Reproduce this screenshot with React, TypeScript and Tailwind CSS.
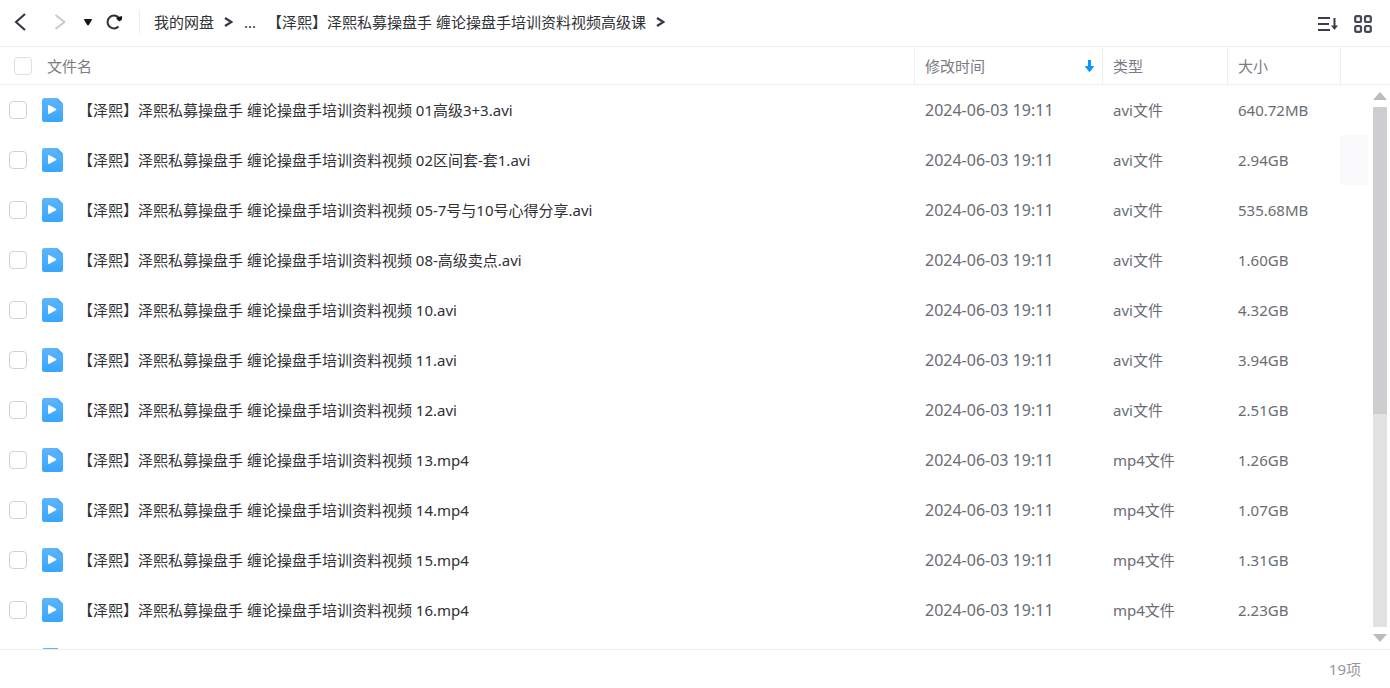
import React from "react";

type FileRow = { name: string; type: string; size: string; marked?: boolean };

const prefix = "【泽熙】泽熙私募操盘手 缠论操盘手培训资料视频 ";

const files: FileRow[] = [
  { name: "01高级3+3.avi", type: "avi文件", size: "640.72MB" },
  { name: "02区间套-套1.avi", type: "avi文件", size: "2.94GB", marked: true },
  { name: "05-7号与10号心得分享.avi", type: "avi文件", size: "535.68MB" },
  { name: "08-高级卖点.avi", type: "avi文件", size: "1.60GB" },
  { name: "10.avi", type: "avi文件", size: "4.32GB" },
  { name: "11.avi", type: "avi文件", size: "3.94GB" },
  { name: "12.avi", type: "avi文件", size: "2.51GB" },
  { name: "13.mp4", type: "mp4文件", size: "1.26GB" },
  { name: "14.mp4", type: "mp4文件", size: "1.07GB" },
  { name: "15.mp4", type: "mp4文件", size: "1.31GB" },
  { name: "16.mp4", type: "mp4文件", size: "2.23GB" },
];

function VideoIcon() {
  return (
    <svg className="h-6 w-[22px] shrink-0" viewBox="0 0 22 24" aria-hidden="true">
      <defs>
        <linearGradient id="file-fill" x1="0" y1="0" x2="0" y2="1">
          <stop offset="0" stopColor="#5fb5fc" />
          <stop offset="1" stopColor="#37a5fd" />
        </linearGradient>
      </defs>
      <path d="M2.500 0H15.500L21 5.500V21.500a2.500 2.500 0 0 1-2.500 2.500H2.500A2.500 2.500 0 0 1 0 21.500V2.500A2.500 2.500 0 0 1 2.500 0Z" fill="url(#file-fill)" />
      <path d="M15.500 0.500L20.500 5.500H17.500a2 2 0 0 1-2-2Z" fill="#4aa9f8" />
      <path d="M6 7.700v7.600c0 .7.500.9 1 .6l6.900-3.700c.6-.4.6-1 0-1.400L7 7.100c-.5-.3-1 0-1 .6Z" fill="#fff" />
    </svg>
  );
}

function Chevron() {
  return (
    <svg className="h-[10px] w-[9px]" viewBox="0 0 9 10" fill="none" stroke="#333640" strokeWidth="2.200" aria-hidden="true">
      <path d="M1 1l6.500 4L1 9" />
    </svg>
  );
}

const boxClass =
  "block size-[18px] shrink-0 appearance-none rounded-[4px] border bg-white checked:bg-[#06a7ff]";

export default function App() {
  return (
    <div className="flex h-screen flex-col overflow-hidden bg-white font-['Noto_Sans','Noto_Sans_CJK_SC',sans-serif] text-[15px] leading-5 text-[#303136]">
      <header className="flex h-[46px] shrink-0 items-center justify-between pr-[18px] pl-3">
        <div className="flex items-center pb-[2px]">
          <button aria-label="后退" className="flex h-6 w-4 items-center justify-center">
            <svg className="h-[18px] w-3" viewBox="0 0 12 18" fill="none" stroke="#30323c" strokeWidth="2">
              <path d="M11 1L2 9l9 8" />
            </svg>
          </button>
          <button aria-label="前进" className="ml-6 flex h-6 w-4 items-center justify-center">
            <svg className="h-4 w-3" viewBox="0 0 12 16" fill="none" stroke="#c8c9cc" strokeWidth="2">
              <path d="M1.500 1l9 7-9 7" />
            </svg>
          </button>
          <button aria-label="历史记录" className="ml-3 flex h-6 w-4 items-center justify-center">
            <svg className="h-[7px] w-2" viewBox="0 0 8 7" fill="#15161c">
              <path d="M.5 0h7q.7.2.3 1L5 5.800q-1 1.200-2 0L.2 1Q-.2.2.5 0Z" />
            </svg>
          </button>
          <button aria-label="刷新" className="ml-2 flex h-6 w-5 items-center justify-center">
            <svg className="size-[18px]" viewBox="0 0 18 18" fill="none">
              <path d="M13.500 13.500A6.400 6.400 0 1 1 13.500 4.500" stroke="#30323c" strokeWidth="2" />
              <path d="M17 3v3.500l-2.500 2L11.500 6V4.500Z" fill="#15161c" />
            </svg>
          </button>
          <span className="ml-[15px] h-6 w-px bg-[#ededee]" />
          <nav aria-label="路径" className="ml-[14px] flex items-center whitespace-nowrap">
            <a href="#root">我的网盘</a>
            <span className="mr-[11px] ml-[10px]"><Chevron /></span>
            <a href="#more">...</a>
            <a href="#current" className="ml-[11px]">【泽熙】泽熙私募操盘手 缠论操盘手培训资料视频高级课</a>
            <span className="ml-[10px]"><Chevron /></span>
          </nav>
        </div>
        <div className="flex items-center gap-4 pt-[2px]">
          <button aria-label="排序">
            <svg className="block h-4 w-5" viewBox="0 0 20 16" fill="none" stroke="#3b3d48" strokeWidth="2">
              <path d="M0 2h12M0 8h11M0 14h12M16.500 2v10" />
              <path d="M13 9.500h7l-3.500 4.500Z" fill="#3b3d48" stroke="none" />
            </svg>
          </button>
          <button aria-label="网格视图">
            <svg className="block size-[18px]" viewBox="0 0 18 18" fill="none" stroke="#464854" strokeWidth="2.200">
              <rect x="1.200" y="1.200" width="5.800" height="5.800" rx="1.500" />
              <rect x="11" y="1.200" width="5.800" height="5.800" rx="1.500" />
              <rect x="1.200" y="11" width="5.800" height="5.800" rx="1.500" />
              <rect x="11" y="11" width="5.800" height="5.800" rx="1.500" />
            </svg>
          </button>
        </div>
      </header>

      <main className="relative min-h-0 flex-1 overflow-hidden">
        <table className="w-full table-fixed border-separate border-spacing-0 whitespace-nowrap">
          <colgroup>
            <col />
            <col className="w-[188px]" />
            <col className="w-[125px]" />
            <col className="w-[113px]" />
            <col className="w-[50px]" />
          </colgroup>
          <thead>
            <tr className="h-[39px] text-left text-[#7a7c84] *:border-y *:border-[#eeeeef] *:p-0 *:font-normal">
              <th scope="col">
                <div className="flex items-center gap-[15px] pl-[14px]">
                  <input type="checkbox" aria-label="全选" className={boxClass + " border-[#dfdfe1]"} />
                  <span>文件名</span>
                </div>
              </th>
              <th scope="col" className="border-l">
                <div className="flex items-center justify-between pr-2 pl-[10px]">
                  <span>修改时间</span>
                  <svg className="h-3 w-[9px]" viewBox="0 0 9 12" fill="#0b98fb" aria-label="降序">
                    <path d="M3 0h3v6h2.500q.7.200.2 1L5.200 11.500q-.7.700-1.400 0L.3 7q-.5-.8.200-1H3Z" />
                  </svg>
                </div>
              </th>
              <th scope="col" className="border-l"><span className="pl-[10px]">类型</span></th>
              <th scope="col" className="border-l"><span className="pl-[10px]">大小</span></th>
              <th aria-label="操作" className="border-l" />
            </tr>
          </thead>
          <tbody>
            {files.map((f, i) => (
              <tr key={f.name} className="h-[50px] text-[#6b6c73] *:p-0">
                <td>
                  <div className="flex items-center pl-[9px]">
                    <input id={"file-" + i} type="checkbox" className={boxClass + " border-[#cfd2d6]"} />
                    <span className="ml-[15px]"><VideoIcon /></span>
                    <label htmlFor={"file-" + i} className="ml-[14px] text-[#303136]">{prefix + f.name}</label>
                  </div>
                </td>
                <td><span className="pl-[11px] text-base">2024-06-03 19:11</span></td>
                <td><span className="pl-[11px]">{f.type}</span></td>
                <td><span className="pl-[11px]">{f.size}</span></td>
                <td>{f.marked && <div className="h-[50px] w-7 bg-[#fafafc]" />}</td>
              </tr>
            ))}
            <tr className="h-[50px] *:p-0">
              <td colSpan={5}>
                <div className="pl-[42px]"><VideoIcon /></div>
              </td>
            </tr>
          </tbody>
        </table>
        <div aria-hidden="true" className="absolute top-[46px] right-[3px] bottom-[7px] flex w-[14px] flex-col items-center">
          <svg className="h-2 w-[14px] shrink-0" viewBox="0 0 14 8" fill="#b9bbbe"><path d="M7 0l7 8H0Z" /></svg>
          <div className="my-[7px] min-h-0 w-[14px] flex-1 bg-[#e2e2e3]">
            <div className="h-[59%] bg-[#cdced0]" />
          </div>
          <svg className="h-2 w-[14px] shrink-0" viewBox="0 0 14 8" fill="#b9bbbe"><path d="M7 8L0 0h14Z" /></svg>
        </div>
      </main>

      <footer className="flex h-[39px] shrink-0 items-center justify-end border-t border-[#eeeeef] pr-[29px] text-[#96979c]">
        19项
      </footer>
    </div>
  );
}
